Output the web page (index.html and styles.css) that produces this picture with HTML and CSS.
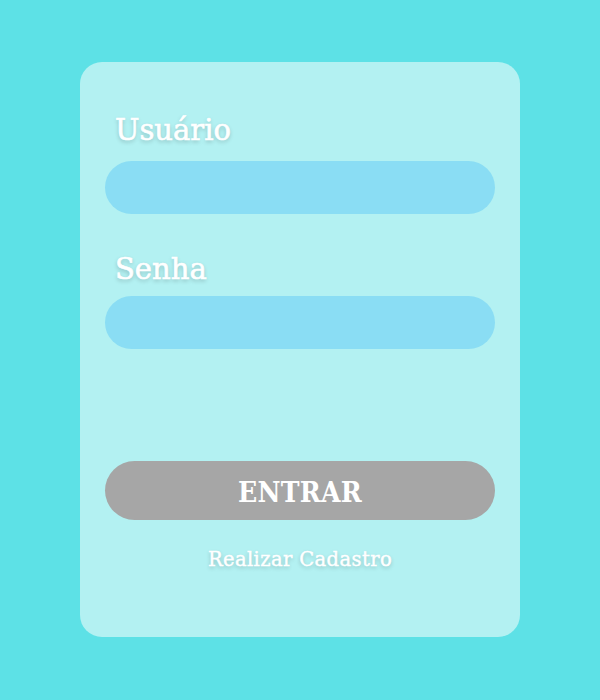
FILE: index.html
```html
<!DOCTYPE html>
<html lang="pt">
<head>
<meta charset="utf-8">
<title>Login</title>
<link rel="stylesheet" href="styles.css">
</head>
<body>
<main class="card">
  <form class="form">
    <label class="label" for="user">Usuário</label>
    <input class="field" id="user" type="text">
    <label class="label label-second" for="pass">Senha</label>
    <input class="field" id="pass" type="password">
    <button class="btn" type="button">ENTRAR</button>
    <a class="link" href="#">Realizar Cadastro</a>
  </form>
</main>
</body>
</html>
```
FILE: styles.css
```css
html, body {
  margin: 0;
  padding: 0;
}
body {
  background: #5de1e6;
  height: 700px;
  font-family: "DejaVu Serif", serif;
}
.card {
  width: 440px;
  height: 575px;
  margin: 62px auto 0;
  background: #b3f1f2;
  border-radius: 22px;
  box-sizing: border-box;
  padding: 0 25px;
}
.form {
  display: flex;
  flex-direction: column;
  padding-top: 48px;
}
.label {
  color: #fff;
  font-size: 29px;
  line-height: 40px;
  padding-left: 10px;
  -webkit-text-stroke: 0.6px #fff;
  text-shadow: 0 2px 4px rgba(0, 0, 0, 0.22);
  margin-bottom: 11px;
}
.label-second {
  margin-top: 35px;
  margin-bottom: 7px;
}
.field {
  height: 53px;
  border: none;
  border-radius: 27px;
  background: #8addf4;
  outline: none;
  padding: 0 20px;
  box-sizing: border-box;
  width: 100%;
}
.btn {
  margin-top: 112px;
  height: 59px;
  border: none;
  border-radius: 30px;
  background: #a6a6a6;
  color: #fff;
  font-family: "DejaVu Serif Condensed", "DejaVu Serif", serif;
  font-size: 28px;
  font-weight: bold;
  letter-spacing: 0.3px;
  padding: 3px 0 0;
}
.link {
  margin-top: 28px;
  align-self: center;
  color: #fff;
  text-decoration: none;
  font-size: 19.5px;
  -webkit-text-stroke: 0.4px #fff;
  letter-spacing: 0.4px;
  text-shadow: 0 2px 4px rgba(0, 0, 0, 0.22);
}
```
